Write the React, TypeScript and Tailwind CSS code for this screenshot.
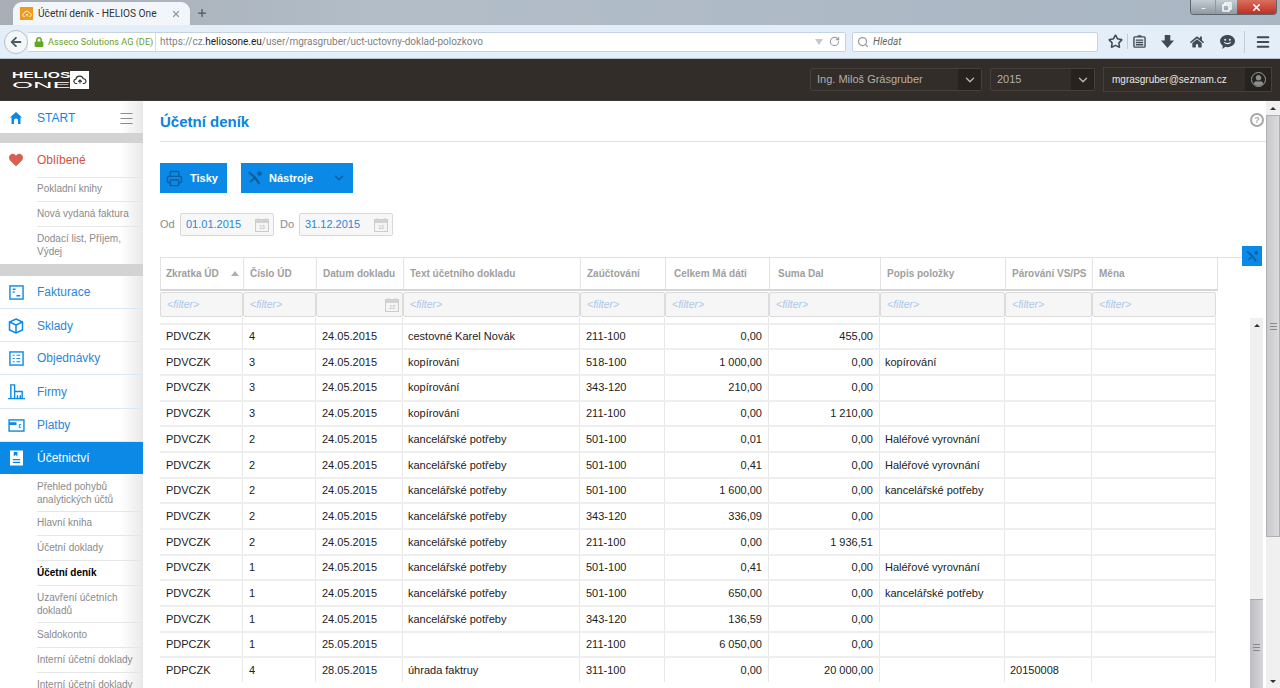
import React from 'react';
import { ChevronDown, Menu, Minus, Plus, Printer, RotateCw, Search, Star, X } from 'lucide-react';
import { FaArrowLeft, FaHeart, FaHome, FaLock, FaUser } from 'react-icons/fa';

const gridCols = 'grid grid-cols-[83px_73px_87px_177px_85px_104px_111px_125px_87px_124px]';

const columns = ['Zkratka ÚD', 'Číslo ÚD', 'Datum dokladu', 'Text účetního dokladu', 'Zaúčtování', 'Celkem Má dáti', 'Suma Dal', 'Popis položky', 'Párování VS/PS', 'Měna'];

const rows = [
  ['PDVCZK', '4', '24.05.2015', 'cestovné Karel Novák', '211-100', '0,00', '455,00', '', ''],
  ['PDVCZK', '3', '24.05.2015', 'kopírování', '518-100', '1 000,00', '0,00', 'kopírování', ''],
  ['PDVCZK', '3', '24.05.2015', 'kopírování', '343-120', '210,00', '0,00', '', ''],
  ['PDVCZK', '3', '24.05.2015', 'kopírování', '211-100', '0,00', '1 210,00', '', ''],
  ['PDVCZK', '2', '24.05.2015', 'kancelářské potřeby', '501-100', '0,01', '0,00', 'Haléřové vyrovnání', ''],
  ['PDVCZK', '2', '24.05.2015', 'kancelářské potřeby', '501-100', '0,41', '0,00', 'Haléřové vyrovnání', ''],
  ['PDVCZK', '2', '24.05.2015', 'kancelářské potřeby', '501-100', '1 600,00', '0,00', 'kancelářské potřeby', ''],
  ['PDVCZK', '2', '24.05.2015', 'kancelářské potřeby', '343-120', '336,09', '0,00', '', ''],
  ['PDVCZK', '2', '24.05.2015', 'kancelářské potřeby', '211-100', '0,00', '1 936,51', '', ''],
  ['PDVCZK', '1', '24.05.2015', 'kancelářské potřeby', '501-100', '0,41', '0,00', 'Haléřové vyrovnání', ''],
  ['PDVCZK', '1', '24.05.2015', 'kancelářské potřeby', '501-100', '650,00', '0,00', 'kancelářské potřeby', ''],
  ['PDVCZK', '1', '24.05.2015', 'kancelářské potřeby', '343-120', '136,59', '0,00', '', ''],
  ['PDPCZK', '1', '25.05.2015', '', '211-100', '6 050,00', '0,00', '', ''],
  ['PDPCZK', '4', '28.05.2015', 'úhrada faktruy', '311-100', '0,00', '20 000,00', '', '20150008'],
];

const CloudIcon = ({ className }: { className?: string }) => (
  <svg viewBox="0 0 20 14" className={className} fill="none" stroke="currentColor" strokeWidth="1.6">
    <path d="M6 12H4.5a3 3 0 0 1-.4-6 5.5 5.5 0 0 1 10.6-.8A3.4 3.4 0 0 1 15.500 12H14" />
    <path d="M10 12V7M7.500 9.500 10 7l2.500 2.500" />
  </svg>
);

const ToolsIcon = ({ className }: { className?: string }) => (
  <svg viewBox="0 0 16 16" className={className} fill="none" stroke="currentColor" strokeWidth="2.200">
    <path d="M1.500 2 8 7.500l4.500 6.500" />
    <path d="M8 7.500 3 12" strokeWidth="1.800" />
    <circle cx="12.500" cy="3.500" r="2.200" fill="currentColor" stroke="none" />
  </svg>
);

const CalendarIcon = () => (
  <svg viewBox="0 0 14 14" className="w-[14px] h-[14px] text-[#cccccc]" fill="none" stroke="currentColor">
    <rect x="0.500" y="1.500" width="13" height="12" fill="#f4f4f4" />
    <path d="M0.500 3.500h13" strokeWidth="2.500" />
    <path d="M3 0v2M11 0v2" />
    <text x="7" y="11" fontSize="5" textAnchor="middle" fill="#b5b5b5" stroke="none">13</text>
  </svg>
);

const InvoiceIcon = () => (
  <svg viewBox="0 0 16 16" className="w-[15px] h-[15px]" fill="none" stroke="currentColor" strokeWidth="1.500">
    <rect x="1" y="1" width="14" height="14" />
    <path d="M4 4.500h3M4 7.500h2M8 11.500h4" />
  </svg>
);

const BoxIcon = () => (
  <svg viewBox="0 0 16 16" className="w-[16px] h-[16px]" fill="none" stroke="currentColor" strokeWidth="1.500">
    <path d="M8 1l6.500 3v8L8 15l-6.500-3V4z" />
    <path d="M1.500 4 8 7l6.500-3M8 7v8" />
  </svg>
);

const OrdersIcon = () => (
  <svg viewBox="0 0 16 16" className="w-[15px] h-[15px]" fill="none" stroke="currentColor" strokeWidth="1.500">
    <rect x="1" y="1" width="14" height="14" />
    <path d="M4 4.500h2M8 4.500h4M4 8h2M8 8h4M4 11.500h2M8 11.500h4" strokeWidth="1.200" />
  </svg>
);

const CompanyIcon = () => (
  <svg viewBox="0 0 18 18" className="w-[17px] h-[17px]" fill="none" stroke="currentColor" strokeWidth="1.500">
    <path d="M3 16V2h4v14M7 9h8v7M0 16.500h18" />
    <path d="M10 16v-3M13 16v-3" />
  </svg>
);

const PayIcon = () => (
  <svg viewBox="0 0 18 14" className="w-[17px] h-[13px]" fill="none" stroke="currentColor" strokeWidth="1.500">
    <rect x="1" y="1" width="16" height="12" />
    <path d="M1 5h8" strokeWidth="3" />
    <path d="M14 6h-2v3h2" strokeWidth="1" />
  </svg>
);

const LedgerIcon = () => (
  <svg viewBox="0 0 14 16" className="w-[13px] h-[16px]" fill="currentColor">
    <path d="M0 0h14v16H0zM3 9v1.500h8V9zm0 3v1.500h8V12zM4 1.500V6l2-1.200L8 6V1.500z" fillRule="evenodd" />
  </svg>
);

const StartIcon = () => (
  <svg viewBox="0 0 12 12" className="w-[12px] h-[12px]" fill="currentColor">
    <path d="M6 0l6 5.500h-1.500V12H8V8.500a2 2 0 0 0-4 0V12H1.500V5.500H0z" />
  </svg>
);

const ChatIcon = () => (
  <svg viewBox="0 0 16 15" className="w-[15px] h-[14px]">
    <path d="M8 0c4.400 0 8 2.800 8 6.500S12.400 13 8 13c-.8 0-1.600-.1-2.300-.3L2.500 15l.4-3.500C1.100 10.300 0 8.500 0 6.500 0 2.800 3.600 0 8 0z" fill="currentColor" />
    <circle cx="5.500" cy="5" r="1.100" fill="#e3eef9" />
    <circle cx="10.500" cy="5" r="1.100" fill="#e3eef9" />
    <path d="M4.500 8c1.800 1.700 5.200 1.700 7 0" fill="none" stroke="#e3eef9" strokeWidth="1.200" />
  </svg>
);

const MainItem = ({ icon, label, h, active }: { icon: React.ReactNode; label: string; h: string; active?: boolean }) => (
  <div className={`${h} flex items-center border-b ${active ? 'bg-[#0a8ae6] text-white border-[#0a8ae6]' : 'text-[#2c86d6] border-[#d8e8f4]'}`}>
    <span className={`w-[37px] flex justify-center pr-[5px] ${active ? 'text-white' : 'text-[#0a8ae6]'}`}>{icon}</span>
    <span className="text-[12px]">{label}</span>
  </div>
);

const SubItem = ({ h, active, last, flush, children }: { h: string; active?: boolean; last?: boolean; flush?: boolean; children: React.ReactNode }) => (
  <div className={`${h} ml-[37px] flex items-center text-[10px] leading-[13px] ${flush ? '' : 'pb-[2px]'} ${last ? '' : 'border-b border-[#e6e6e6]'} ${active ? 'font-bold text-black' : 'text-[#8a8a8a]'}`}>
    <span>{children}</span>
  </div>
);

const Sidebar = () => (
  <aside className="w-[143px] shrink-0 bg-[linear-gradient(90deg,#ffffff_84%,#e9e9e9)] overflow-hidden">
    <div className="h-[32px] pt-[2px] flex items-center text-[#0a8ae6]">
      <span className="w-[37px] flex justify-center pr-[5px]"><StartIcon /></span>
      <span className="text-[12px] flex-1">START</span>
      <Menu className="w-[17px] h-[17px] mr-[8px] text-[#8c8c8c]" strokeWidth={1.500} />
    </div>
    <div className="h-[10px] bg-[#d3d3d3]" />
    <div className="h-[34px] flex items-center text-[#cf5443]">
      <span className="w-[37px] flex justify-center pr-[5px]"><FaHeart className="w-[14px] h-[14px] text-[#d9604e]" /></span>
      <span className="text-[12px]">Oblíbené</span>
    </div>
    <div className="border-t border-[#e6e6e6] ml-[37px]" />
    <SubItem h="h-[24px]">Pokladní knihy</SubItem>
    <SubItem h="h-[25px]">Nová vydaná faktura</SubItem>
    <SubItem h="h-[37px]" last>Dodací list, Příjem, Výdej</SubItem>
    <div className="h-[12px] bg-[#d3d3d3]" />
    <MainItem h="h-[33px]" icon={<InvoiceIcon />} label="Fakturace" />
    <MainItem h="h-[33px] pt-[1px]" icon={<BoxIcon />} label="Sklady" />
    <MainItem h="h-[33px]" icon={<OrdersIcon />} label="Objednávky" />
    <MainItem h="h-[34px]" icon={<CompanyIcon />} label="Firmy" />
    <MainItem h="h-[33px]" icon={<PayIcon />} label="Platby" />
    <MainItem h="h-[32px] pt-[1px]" icon={<LedgerIcon />} label="Účetnictví" active />
    <SubItem h="h-[38px]" flush>Přehled pohybů analytických účtů</SubItem>
    <SubItem h="h-[24px]">Hlavní kniha</SubItem>
    <SubItem h="h-[25px]">Účetní doklady</SubItem>
    <SubItem h="h-[25px]" active>Účetní deník</SubItem>
    <SubItem h="h-[37px]" flush>Uzavření účetních dokladů</SubItem>
    <SubItem h="h-[25px]">Saldokonto</SubItem>
    <SubItem h="h-[25px]">Interní účetní doklady</SubItem>
    <SubItem h="h-[25px]" last>Interní účetní doklady</SubItem>
  </aside>
);

const BrowserChrome = () => (
  <div className="font-['Roboto',sans-serif]">
    <div className="h-[25px] flex bg-[linear-gradient(90deg,#a7aeb5,#b2bdc8_30%,#a9b6c3)]">
      <div className="ml-[13px] mt-[2px] w-[177px] h-[23px] bg-[#f2f6fb] rounded-t-[9px] flex items-center pl-[7px] text-[10.200px] text-[#333]">
        <span className="w-[13px] h-[13px] bg-[#f09a1a] text-white flex items-center justify-center mr-[5px]">
          <CloudIcon className="w-[10px] h-[8px]" />
        </span>
        <span className="flex-1 whitespace-nowrap">Účetní deník - HELIOS One</span>
        <X className="w-[10px] h-[10px] text-[#8f9aa5] mr-[9px]" strokeWidth={3} />
      </div>
      <Plus className="w-[12px] h-[12px] ml-[6px] mt-[7px] text-[#4a5560]" strokeWidth={2.500} />
      <div className="ml-auto mr-[3px] h-[15px] flex rounded-b-[4px] overflow-hidden border border-t-0 border-[#5c646c]">
        <div className="w-[24px] bg-[linear-gradient(180deg,#c4ccd3,#8f99a3)] flex items-end justify-center pb-[3px]"><Minus className="w-[11px] h-[5px] text-white" strokeWidth={4} /></div>
        <div className="w-[22px] bg-[linear-gradient(180deg,#c4ccd3,#8f99a3)] flex items-center justify-center border-l border-[#8d98a2]">
          <svg viewBox="0 0 10 10" className="w-[10px] h-[10px] text-white" fill="none" stroke="currentColor" strokeWidth="1.400"><rect x="1" y="3" width="6" height="6" /><path d="M3 3V1h6v6H7" /></svg>
        </div>
        <div className="w-[39px] bg-[linear-gradient(180deg,#d9705f,#bd2f22)] flex items-center justify-center"><X className="w-[11px] h-[11px] text-white" strokeWidth={3.500} /></div>
      </div>
    </div>
    <div className="h-[34px] bg-[#e3eef9] border-b border-[#b4c0cc] flex items-center text-[10px]">
      <div className="ml-[4px] w-[24px] h-[24px] rounded-full bg-[#f4f7fa] border border-[#b5c0cb] flex items-center justify-center shrink-0">
        <FaArrowLeft className="w-[12px] h-[12px] text-[#4f5963]" />
      </div>
      <div className="w-[818px] h-[20px] bg-white border border-[#c5d2df] border-l-0 rounded-r-[2px] flex items-center pl-[6px]">
        <FaLock className="w-[10px] h-[10px] text-[#5fa81f] mr-[4px]" />
        <span className="w-[108px] text-[9.200px] text-[#6b9f2e] border-r border-[#dddddd] mr-[4px] leading-[18px] whitespace-nowrap">Asseco Solutions AG (DE)</span>
        <span className="text-[#7f7f7f] flex-1 whitespace-nowrap">https://cz.<span className="text-[#222]">heliosone.eu</span>/user/mgrasgruber/uct-uctovny-doklad-polozkovo</span>
        <span className="w-0 h-0 border-x-[4px] border-x-transparent border-t-[6px] border-t-[#c2c8cd] mr-[6px]" />
        <RotateCw className="w-[11px] h-[11px] text-[#9aa3ab] mr-[5px]" strokeWidth={2.500} />
      </div>
      <div className="ml-[6px] w-[246px] h-[20px] bg-white border border-[#c5d2df] rounded-[2px] flex items-center pl-[4px]">
        <Search className="w-[12px] h-[12px] text-[#9a9a9a] mr-[4px]" strokeWidth={2.500} />
        <span className="italic text-[#666]">Hledat</span>
      </div>
      <div className="flex items-center text-[#3f4a54] ml-[10px]">
        <Star className="w-[15px] h-[15px]" strokeWidth={2.500} />
        <span className="w-px h-[15px] bg-[#c2ccd6] ml-[4px] mr-[5px]" />
        <svg viewBox="0 0 14 14" className="w-[13px] h-[13px]" fill="none" stroke="currentColor" strokeWidth="1.500"><rect x="1" y="2" width="12" height="11" rx="1" /><path d="M5 1h4M3 5.500h8M3 8h8M3 10.500h8" /></svg>
        <svg viewBox="0 0 14 14" className="w-[13px] h-[13px] ml-[15px]" fill="currentColor"><path d="M4 0h6v6h4l-7 8-7-8h4z" /></svg>
        <FaHome className="w-[14px] h-[14px] ml-[16px]" />
        <span className="ml-[16px]"><ChatIcon /></span>
        <span className="w-px h-[22px] bg-[#c2ccd6] ml-[9px] mr-[10px]" />
        <Menu className="w-[16px] h-[16px]" strokeWidth={3} />
      </div>
    </div>
  </div>
);

const AppHeader = () => (
  <header className="h-[42px] bg-[#322d28] border-b border-[#3e3934] flex items-center text-[11px] text-[#b4b0ab]">
    <div className="ml-[12px] flex items-center text-white">
      <div className="w-[58px] text-[9.500px] leading-[9.500px]">
        <div className="font-bold origin-left scale-x-[1.650]">HELIOS</div>
        <div className="origin-left scale-x-[2.850]">ONE</div>
      </div>
      <span className="w-[19px] h-[18px] bg-white text-[#322d28] flex items-center justify-center">
        <CloudIcon className="w-[14px] h-[10px]" />
      </span>
    </div>
    <div className="ml-auto flex items-center">
      <div className="w-[172px] h-[23px] border border-[#45403b] rounded-[2px] flex items-center">
        <span className="flex-1 pl-[6px]">Ing. Miloš Grásgruber</span>
        <span className="w-[23px] h-full bg-[#26221e] flex items-center justify-center"><ChevronDown className="w-[14px] h-[14px]" strokeWidth={2.500} /></span>
      </div>
      <div className="ml-[8px] w-[105px] h-[23px] border border-[#45403b] rounded-[2px] flex items-center">
        <span className="flex-1 pl-[6px]">2015</span>
        <span className="w-[23px] h-full bg-[#26221e] flex items-center justify-center"><ChevronDown className="w-[14px] h-[14px]" strokeWidth={2.500} /></span>
      </div>
      <div className="ml-[8px] mr-[8px] w-[169px] h-[25px] border border-[#45403b] flex items-center text-[#e8e6e3]">
        <span className="flex-1 pl-[8px] text-[10px]">mgrasgruber@seznam.cz</span>
        <span className="w-[26px] h-full bg-[#26221e] flex items-center justify-center">
          <span className="w-[15px] h-[15px] rounded-full border border-[#999] overflow-hidden flex items-end justify-center">
            <FaUser className="w-[11px] h-[11px] text-[#8d8d8d]" />
          </span>
        </span>
      </div>
    </div>
  </header>
);

const DateField = ({ value }: { value: string }) => (
  <div className="w-[94px] h-[23px] bg-[#f7f7f7] border border-[#d8d8d8] rounded-[2px] flex items-center justify-between pl-[5px] pr-[4px] text-[#2c86d6]">
    <span>{value}</span>
    <CalendarIcon />
  </div>
);

const Grip = () => (
  <div className="flex flex-col gap-[2px] items-center">
    <span className="w-[7px] h-px bg-[#888]" />
    <span className="w-[7px] h-px bg-[#888]" />
    <span className="w-[7px] h-px bg-[#888]" />
  </div>
);

const Table = () => (
  <div className="w-[1058px] text-[11px] shrink-0">
    <div className="h-[34px] border-t border-l border-[#e3e3e3] border-b-2 border-b-[#d6d6d6] grid grid-cols-[83px_73px_87px_177px_85px_104px_111px_125px_87px_125px] text-[10px] font-bold text-[#a0a0a0]">
      {columns.map((c, i) => (
        <div key={c} className={`border-r border-[#e3e3e3] flex items-center whitespace-nowrap ${i === 0 ? 'pl-[5px] pr-[4px] justify-between' : i === 5 || i === 6 ? 'pl-[8px]' : 'pl-[6px]'}`}>
          <span>{c}</span>
          {i === 0 && <span className="w-0 h-0 border-x-[4px] border-x-transparent border-b-[5px] border-b-[#b0b0b0]" />}
        </div>
      ))}
    </div>
    <div className={`${gridCols} w-[1056px] h-[25px] mt-[1px] text-[10.500px] italic text-[#a9c8ea]`}>
      {columns.map((c, i) => (
        <div key={c} className="bg-[#f6f6f6] border border-[#dcdcdc] rounded-[2px] flex items-center justify-between pl-[6px] pr-[3px]">
          {i === 2 ? <span /> : <span>&lt;filter&gt;</span>}
          {i === 2 && <CalendarIcon />}
        </div>
      ))}
    </div>
    <div className={`${gridCols} w-[1056px] h-[5.500px]`}>
      {columns.map((c) => (
        <div key={c} className="border-r border-[#e8e8e8]" />
      ))}
    </div>
    <div className="w-[1056px] border-r border-[#e8e8e8] text-[#222]">
      {rows.map((r, i) => (
        <div key={i} className={`${gridCols} h-[25.690px] border-t-2 border-[#eeeeee] items-stretch`}>
          <div className="border-r border-[#e8e8e8] flex items-center pl-[6px]">{r[0]}</div>
          <div className="border-r border-[#e8e8e8] flex items-center pl-[6px]">{r[1]}</div>
          <div className="border-r border-[#e8e8e8] flex items-center pl-[6px]">{r[2]}</div>
          <div className="border-r border-[#e8e8e8] flex items-center pl-[5px]">{r[3]}</div>
          <div className="border-r border-[#e8e8e8] flex items-center pl-[6px]">{r[4]}</div>
          <div className="border-r border-[#e8e8e8] flex items-center justify-end pr-[6px]">{r[5]}</div>
          <div className="border-r border-[#e8e8e8] flex items-center justify-end pr-[6px]">{r[6]}</div>
          <div className="border-r border-[#e8e8e8] flex items-center pl-[5px]">{r[7]}</div>
          <div className="border-r border-[#e8e8e8] flex items-center pl-[5px]">{r[8]}</div>
          <div />
        </div>
      ))}
    </div>
  </div>
);

export default function App() {
  return (
    <div className="w-[1280px] h-[688px] overflow-hidden bg-white flex flex-col font-['Liberation_Sans',Arial,sans-serif]">
      <BrowserChrome />
      <AppHeader />
      <div className="flex-1 flex min-h-0">
        <Sidebar />
        <main className="flex-1 min-w-0 flex overflow-hidden">
          <div className="w-[1123px] shrink-0 pl-[17px] relative flex flex-col min-h-0">
            <div className="h-[41px] shrink-0 border-b border-[#e2e2e2] flex items-center justify-between pr-[1px]">
              <h1 className="text-[15px] font-bold text-[#0a84dc] pt-[2px]">Účetní deník</h1>
              <span className="w-[14px] h-[14px] mr-[1px] mb-[2px] rounded-full border-2 border-[#a8a8a8] text-[9px] font-bold leading-[9px] text-[#a8a8a8] flex items-center justify-center">?</span>
            </div>
            <div className="flex gap-[14px] mt-[21px] text-[11px] font-bold text-white shrink-0">
              <button className="w-[67px] h-[30px] bg-[#0a8ae6] flex items-center pl-[6px]">
                <Printer className="w-[17px] h-[17px] text-[#0a5fa3] mr-[7px]" strokeWidth={2} />
                Tisky
              </button>
              <button className="w-[112px] h-[30px] bg-[#0a8ae6] flex items-center pl-[6px]">
                <ToolsIcon className="w-[16px] h-[16px] text-[#0a5fa3] mr-[6px]" />
                <span className="flex-1 text-left">Nástroje</span>
                <ChevronDown className="w-[14px] h-[14px] text-[#0a5fa3] mr-[7px]" strokeWidth={2.500} />
              </button>
            </div>
            <div className="flex items-center mt-[20px] text-[11px] text-[#8a8a8a] shrink-0">
              <span className="w-[20px]">Od</span>
              <DateField value="01.01.2015" />
              <span className="ml-[6px] w-[19px]">Do</span>
              <DateField value="31.12.2015" />
            </div>
            <div className="mt-[21px] flex flex-1 min-h-0 overflow-hidden">
              <Table />
              <div className="ml-[32px] w-[13px] shrink-0 mt-[61px] bg-[#f0f0f0] flex flex-col items-center overflow-hidden">
                <div className="h-[14px] shrink-0 flex items-center"><span className="w-0 h-0 border-x-[3px] border-x-transparent border-b-[3px] border-b-[#333]" /></div>
                <div className="mt-[267px] h-[96px] shrink-0 bg-[linear-gradient(90deg,#bdbdc1,#d6d6da)] border-t border-[#aaaaaa] w-full flex items-center justify-center">
                  <Grip />
                </div>
              </div>
            </div>
            <div className="absolute left-[1075px] top-[156px] w-[24px] border-t border-[#e3e3e3]" />
            <div className="absolute left-[1099px] top-[145px] w-[20px] h-[20px] bg-[#0a8ae6] flex items-center justify-center">
              <ToolsIcon className="w-[13px] h-[13px] text-[#0a5fa3]" />
            </div>
          </div>
          <div className="ml-[0px] w-[14px] shrink-0 bg-[#f0f0f0] flex flex-col items-center">
            <div className="h-[14px] shrink-0 flex items-center"><span className="w-0 h-0 border-x-[3px] border-x-transparent border-b-[3px] border-b-[#333]" /></div>
            <div className="h-[422px] shrink-0 w-full bg-[linear-gradient(90deg,#c9c9cd,#dcdcdf)] border border-[#b0b0b0] flex items-center justify-center">
              <Grip />
            </div>
            <div className="mt-auto h-[14px] shrink-0 flex items-center"><span className="w-0 h-0 border-x-[3px] border-x-transparent border-t-[3px] border-t-[#333]" /></div>
          </div>
        </main>
      </div>
    </div>
  );
}
